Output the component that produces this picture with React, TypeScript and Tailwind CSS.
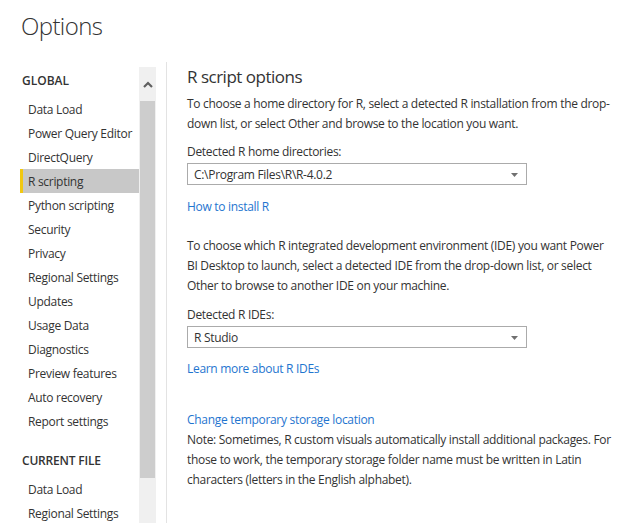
import React from "react";

const font = { fontFamily: '"Open Sans", "Noto Sans", sans-serif' };

const globalItems = [
  "Data Load",
  "Power Query Editor",
  "DirectQuery",
  "R scripting",
  "Python scripting",
  "Security",
  "Privacy",
  "Regional Settings",
  "Updates",
  "Usage Data",
  "Diagnostics",
  "Preview features",
  "Auto recovery",
  "Report settings",
];

function NavItem({ label, active }: { label: string; active?: boolean }) {
  return (
    <div
      className={
        "relative h-[24px] flex items-center pl-[8px] pt-[2px] text-[12px] tracking-[-0.3px] whitespace-nowrap text-[#333333] " +
        (active ? "bg-[#c8c8c8]" : "")
      }
    >
      {active && <div className="absolute left-0 top-0 h-full w-[3px] bg-[#f2c811]" />}
      {label}
    </div>
  );
}

function Dropdown({ value }: { value: string }) {
  return (
    <div className="w-[340px] h-[22px] border border-[#ababab] flex items-center justify-between pl-[6px] pr-[8px] pt-[1px] text-[12px] text-[#333333] bg-white">
      <span>{value}</span>
      <svg width="7" height="4" viewBox="0 0 7 4">
        <path d="M0 0 H7 L3.5 4 Z" fill="#707070" />
      </svg>
    </div>
  );
}

export default function App() {
  return (
    <div className="w-[627px] h-[523px] overflow-hidden bg-white" style={font}>
      <div className="h-[60px] pl-[21px] pt-[8px]">
        <div className="text-[24px] font-light tracking-[-0.6px] text-[#333333] leading-[36px]">Options</div>
      </div>
      <div className="flex h-[463px]">
        <div className="w-[139px] pl-[20px] pt-[8px] shrink-0">
          <div className="h-[24px] flex items-center pl-[2px] pt-[1px] text-[12px] font-semibold text-[#333333]">GLOBAL</div>
          <div className="mt-[5px]">
            {globalItems.map((l) => (
              <NavItem key={l} label={l} active={l === "R scripting"} />
            ))}
          </div>
          <div className="mt-[15px] h-[24px] flex items-center pl-[2px] pt-[1px] text-[12px] font-semibold text-[#333333] tracking-[-0.2px]">CURRENT FILE</div>
          <div className="mt-[5px]">
            <NavItem label="Data Load" />
            <NavItem label="Regional Settings" />
          </div>
        </div>
        <div className="w-[17px] mt-[7px] bg-[#f0f0f0] shrink-0 flex flex-col">
          <div className="h-[34px] flex items-center justify-center">
            <svg width="10" height="7" viewBox="0 0 10 7">
              <path d="M1 6 L5 2 L9 6" fill="none" stroke="#606060" strokeWidth="2.2" />
            </svg>
          </div>
          <div className="mx-[1px] h-[377px] bg-[#cdcdcd]" />
        </div>
        <div className="w-[10px] shrink-0" />
        <div className="mt-[2px] border-l border-[#e3e3e3] pl-[20px] flex-1 text-[12px] tracking-[-0.3px] whitespace-nowrap text-[#333333]">
          <div className="text-[17px] tracking-[-0.5px] leading-[24px] mt-[3px] text-[#333333]">R script options</div>
          <div className="leading-[20px] mt-[5px]">
            To choose a home directory for R, select a detected R installation from the drop-
            <br />
            down list, or select Other and browse to the location you want.
          </div>
          <div className="leading-[20px] mt-[8px]">Detected R home directories:</div>
          <div className="mt-[1px]">
            <Dropdown value="C:\Program Files\R\R-4.0.2" />
          </div>
          <div className="leading-[20px] mt-[12px] text-[#1f75cf]">How to install R</div>
          <div className="leading-[20px] mt-[19px]">
            To choose which R integrated development environment (IDE) you want Power
            <br />
            BI Desktop to launch, select a detected IDE from the drop-down list, or select
            <br />
            Other to browse to another IDE on your machine.
          </div>
          <div className="leading-[20px] mt-[9px]">Detected R IDEs:</div>
          <div className="mt-[1px]">
            <Dropdown value="R Studio" />
          </div>
          <div className="leading-[20px] mt-[11px] text-[#1f75cf]">Learn more about R IDEs</div>
          <div className="leading-[20px] mt-[31px] text-[#1f75cf]">Change temporary storage location</div>
          <div className="leading-[20px]">
            Note: Sometimes, R custom visuals automatically install additional packages. For
            <br />
            those to work, the temporary storage folder name must be written in Latin
            <br />
            characters (letters in the English alphabet).
          </div>
        </div>
      </div>
    </div>
  );
}
